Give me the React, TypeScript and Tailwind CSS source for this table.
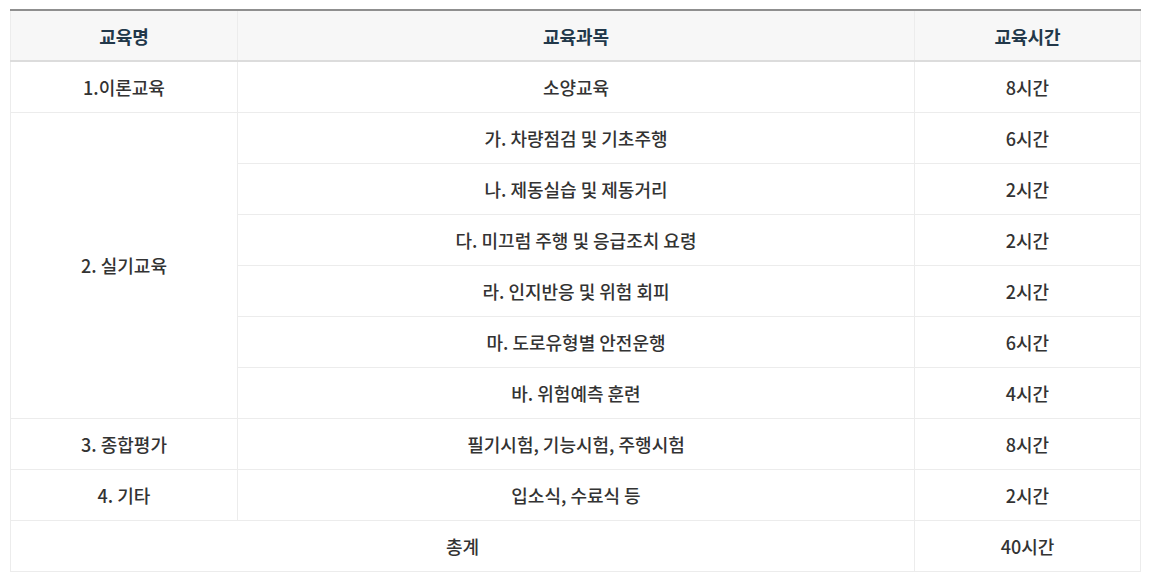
import React from "react";

const font = { fontFamily: '"Noto Sans CJK KR", "Noto Sans", sans-serif' };

const td = "border border-[#ececec] h-[51px] text-center align-middle p-0";

export default function App() {
  const practical = [
    ["가. 차량점검 및 기초주행", "6시간"],
    ["나. 제동실습 및 제동거리", "2시간"],
    ["다. 미끄럼 주행 및 응급조치 요령", "2시간"],
    ["라. 인지반응 및 위험 회피", "2시간"],
    ["마. 도로유형별 안전운행", "6시간"],
    ["바. 위험예측 훈련", "4시간"],
  ];
  return (
    <div className="w-[1153px] h-[584px] bg-white pt-[9px] pl-[10px]" style={font}>
      <table className="w-[1130px] border-collapse table-fixed text-[18px] leading-none text-[#333333] border-t-2 border-t-[#8f8f8f]">
        <colgroup>
          <col className="w-[227px]" />
          <col className="w-[677px]" />
          <col className="w-[226px]" />
        </colgroup>
        <thead>
          <tr className="bg-[#f7f7f7]">
            <th className="border border-[#ececec] border-b-[#dcdcdc] border-b-2 h-[51px] font-bold text-[#22384a] text-center">교육명</th>
            <th className="border border-[#ececec] border-b-[#dcdcdc] border-b-2 h-[51px] font-bold text-[#22384a] text-center">교육과목</th>
            <th className="border border-[#ececec] border-b-[#dcdcdc] border-b-2 h-[51px] font-bold text-[#22384a] text-center">교육시간</th>
          </tr>
        </thead>
        <tbody className="font-medium">
          <tr>
            <td className={td}>1.이론교육</td>
            <td className={td}>소양교육</td>
            <td className={td}>8시간</td>
          </tr>
          {practical.map(([s, h], i) => (
            <tr key={s}>
              {i === 0 && (
                <td className={td} rowSpan={6}>
                  2. 실기교육
                </td>
              )}
              <td className={td}>{s}</td>
              <td className={td}>{h}</td>
            </tr>
          ))}
          <tr>
            <td className={td}>3. 종합평가</td>
            <td className={td}>필기시험, 기능시험, 주행시험</td>
            <td className={td}>8시간</td>
          </tr>
          <tr>
            <td className={td}>4. 기타</td>
            <td className={td}>입소식, 수료식 등</td>
            <td className={td}>2시간</td>
          </tr>
          <tr>
            <td className={td} colSpan={2}>총계</td>
            <td className={td}>40시간</td>
          </tr>
        </tbody>
      </table>
    </div>
  );
}
